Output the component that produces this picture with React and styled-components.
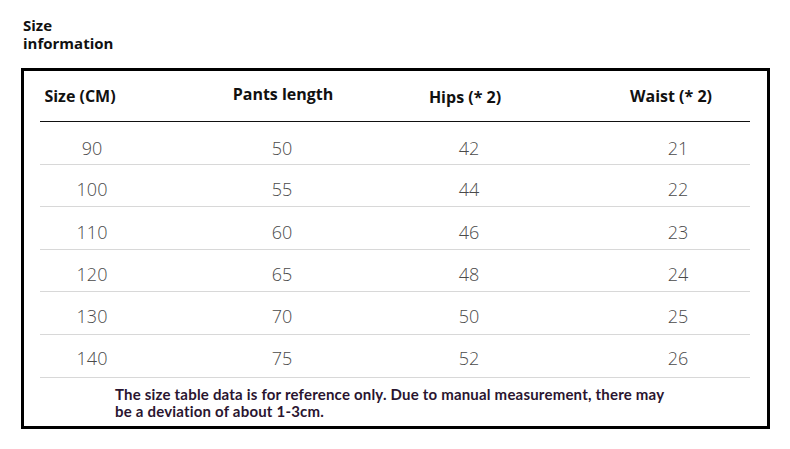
import React from 'react'
import styled, { createGlobalStyle } from 'styled-components'

const Global = createGlobalStyle`
  body {
    margin: 0;
    background: #fff;
    font-family: "Open Sans", "Liberation Sans", sans-serif;
  }
`

const Page = styled.div`
  width: 790px;
  height: 449px;
  padding-top: 16px;
  box-sizing: border-box;
`

const Title = styled.div`
  margin-left: 23px;
  width: 120px;
  font-size: 15px;
  font-weight: 700;
  line-height: 18px;
  color: #111;
`

const Box = styled.div`
  margin: 16px 0 0 21px;
  width: 749px;
  height: 361px;
  box-sizing: border-box;
  border: 3px solid #000;
  padding: 0 17px 0 16px;
`

const cols = '104px 276px 98px 232px'

const HeadRow = styled.div`
  display: grid;
  grid-template-columns: ${cols};
  height: 50px;
  align-items: center;
  border-bottom: 1.5px solid #111;
`

const Row = styled.div`
  display: grid;
  grid-template-columns: ${cols};
  height: 41.6px;
  align-items: start;
  border-bottom: 1px solid #d8d8d8;
`

// shift moves the centre of the text sideways inside its column
const shiftPad = (s) =>
  s >= 0 ? `padding-left: ${s * 2}px;` : `padding-right: ${-s * 2}px;`

const HeadCell = styled.div`
  text-align: center;
  font-size: 16px;
  font-weight: 700;
  color: #111;
  line-height: 20px;
  white-space: nowrap;
  ${(p) => shiftPad(p.$shift || 0)}
  padding-bottom: ${(p) => p.$lift || 0}px;
  padding-top: ${(p) => p.$drop || 0}px;
`

const Cell = styled.div`
  text-align: center;
  font-size: 18px;
  font-weight: 300;
  color: #4a4a4a;
  line-height: 20px;
  padding-top: ${(p) => p.$top}px;
  ${(p) => shiftPad(p.$shift || 0)}
`

const Note = styled.div`
  padding: 8px 0 0 75px;
  font-family: Lato, "Liberation Sans", sans-serif;
  font-weight: 700;
  font-size: 15px;
  letter-spacing: 0.2px;
  line-height: 17px;
  color: #2a1530;
  white-space: nowrap;
`

const headers = [
  { label: 'Size (CM)', shift: -12, drop: 0 },
  { label: 'Pants length', shift: 1, lift: 4 },
  { label: 'Hips (* 2)', shift: -4, drop: 2 },
  { label: 'Waist (* 2)', shift: 37, drop: 0 },
]

const dataShift = [0, 0, 0, 44]

const rows = [
  ['90', '50', '42', '21'],
  ['100', '55', '44', '22'],
  ['110', '60', '46', '23'],
  ['120', '65', '48', '24'],
  ['130', '70', '50', '25'],
  ['140', '75', '52', '26'],
]

export default function App() {
  return (
    <Page>
      <Global />
      <Title>Size information</Title>
      <Box>
        <HeadRow>
          {headers.map((h) => (
            <HeadCell key={h.label} $shift={h.shift} $lift={h.lift} $drop={h.drop}>
              {h.label}
            </HeadCell>
          ))}
        </HeadRow>
        {rows.map((r, i) => (
          <Row key={r[0]}>
            {r.map((v, j) => (
              <Cell key={j} $shift={dataShift[j]} $top={i === 0 ? 16 : 15 - i * 0.3}>
                {v}
              </Cell>
            ))}
          </Row>
        ))}
        <Note>
          The size table data is for reference only. Due to manual measurement, there may
          <br />
          be a deviation of about 1-3cm.
        </Note>
      </Box>
    </Page>
  )
}
